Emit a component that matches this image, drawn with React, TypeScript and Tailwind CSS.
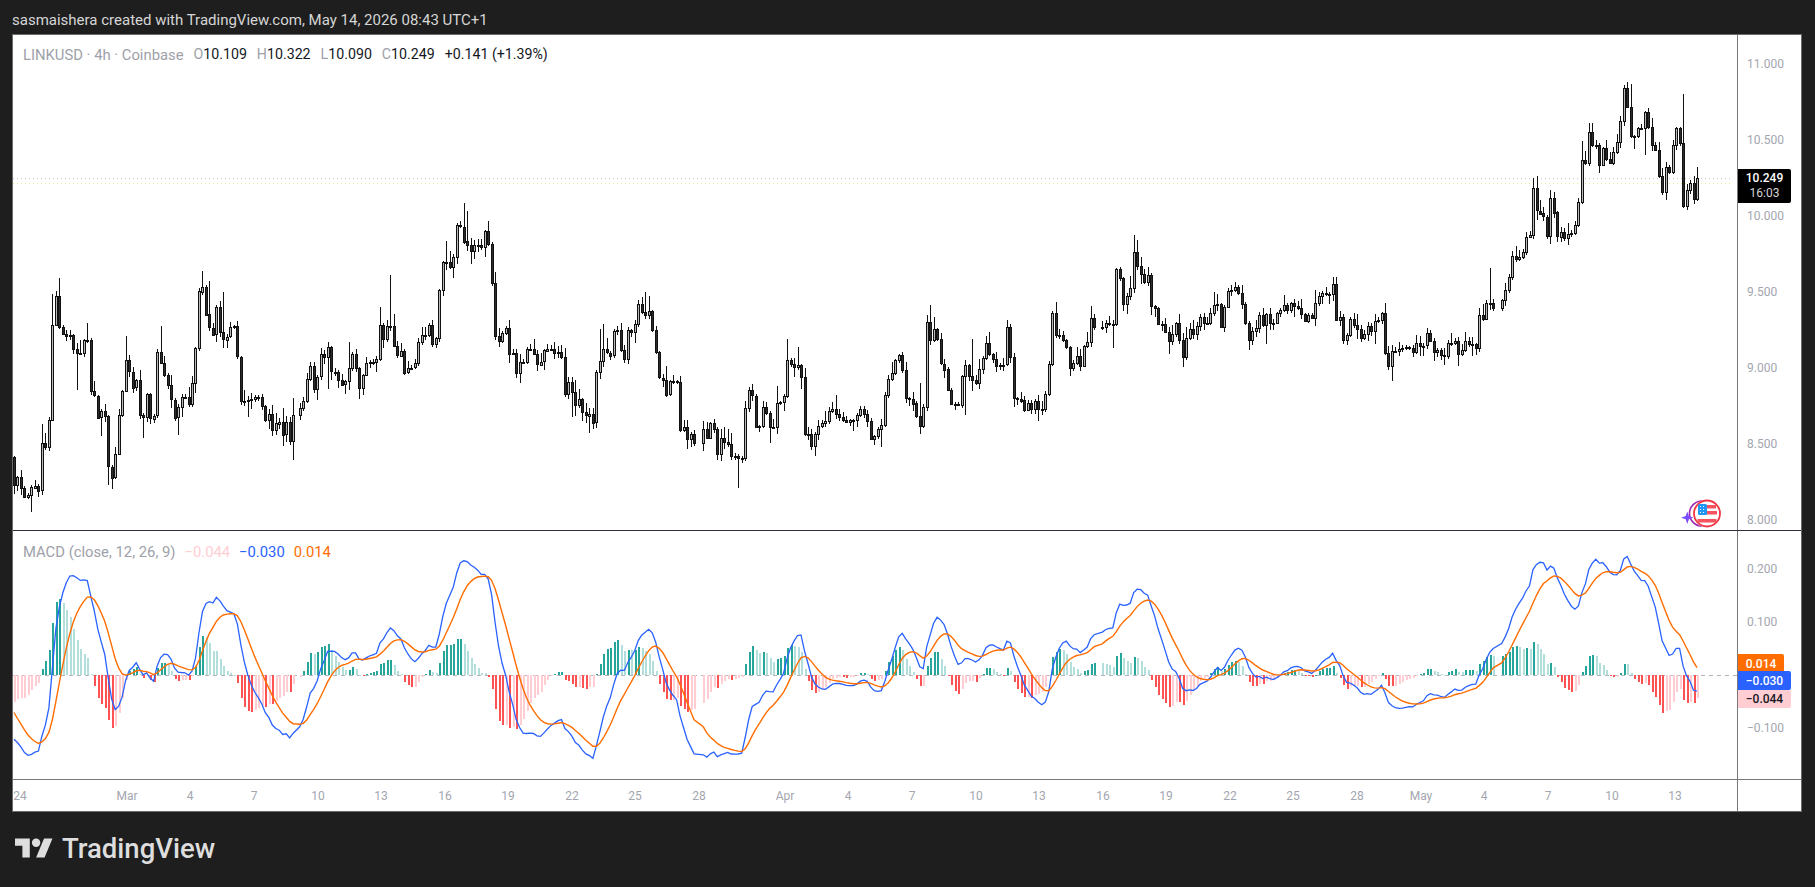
const STEP = 3.49;

// closes traced per candle, in zoom px: y = y0 + v / 3
const SECTIONS = [
  {
    x0: 14, y0: 250, vals: [705, 682, 715, 742, 735, 712, 707, 722, 580, 592, 510, 226, 138, 232, 253, 258, 256, 298, 310, 310, 270, 270, 424, 437, 502, 484, 499, 650, 683, 613, 496, 424, 331, 365, 412, 391, 495, 502, 433, 505, 497, 307, 340, 376, 406, 449, 502, 472, 442, 441, 463, 400, 295, 124, 110, 193, 233, 253, 172, 247, 268, 260, 232, 229, 320, 452, 452, 450, 448, 442, 441, 467, 510, 492, 540, 520, 515, 553, 517, 575, 496],
  },
  {
    x0: 299.7, y0: 190, vals: [655, 634, 568, 529, 597, 560, 493, 503, 472, 545, 547, 570, 584, 574, 535, 493, 535, 596, 556, 520, 517, 517, 508, 406, 448, 408, 408, 469, 496, 482, 547, 535, 533, 520, 457, 436, 436, 406, 464, 445, 301, 217, 217, 232, 202, 106, 110, 154, 166, 184, 166, 165, 172, 124, 163, 280, 439, 454, 430, 415, 493, 490, 551, 517, 516, 478, 478, 493, 523, 515, 481, 476, 476, 488, 487, 502, 613, 577, 607, 646, 628, 667, 676, 671, 697, 547, 514, 478, 488, 497, 424, 421, 481, 508, 421, 428, 403, 343, 367, 376, 364, 421, 487, 563, 569, 613, 574, 574, 576, 721, 712, 748, 733, 760],
  },
  {
    x0: 703.3, y0: 220, vals: [628, 655, 610, 628, 703, 655, 667, 673, 710, 708, 714, 716, 565, 511, 527, 619, 619, 562, 580, 622, 622, 550, 547, 529, 421, 433, 442, 436, 472, 643, 643, 679, 643, 619, 610, 604, 574, 568, 583, 592, 601, 607, 601, 601, 586, 568, 583, 604, 658, 649, 628, 616, 526, 478, 460, 421, 406, 451, 535, 536, 550, 589, 619, 562, 307, 361, 328, 358, 431, 448, 511, 553, 553, 556, 469, 436, 469, 481, 490, 448, 415, 370, 403, 418, 439, 436, 434, 322, 412, 535, 536, 541, 571, 550, 568, 544, 568, 568, 523, 433, 280, 346, 345, 361, 382, 445, 430, 409, 439, 379, 367, 295, 322],
  },
  {
    x0: 1102.3, y0: 220, vals: [321, 310, 313, 313, 148, 175, 253, 229, 205, 97, 139, 163, 187, 166, 259, 265, 313, 313, 337, 364, 343, 310, 361, 412, 355, 328, 343, 319, 292, 310, 310, 280, 256, 253, 322, 262, 214, 211, 202, 220, 253, 310, 361, 334, 325, 286, 316, 283, 310, 310, 280, 271, 256, 271, 250, 259, 265, 283, 304, 286, 295, 250, 229, 220, 221, 223, 193, 301, 292, 361, 346, 298, 316, 328, 355, 343, 319, 334, 304, 301, 280, 400, 439, 394, 394, 388, 385, 382, 385, 397, 370, 379, 377, 340, 364, 397, 391, 406, 408, 370, 370, 364, 403, 391, 364, 373, 373, 385, 286, 298, 250, 250, 265],
  },
  {
    x0: 1501.6, y0: 60, vals: [720, 690, 650, 588, 596, 590, 575, 531, 526, 385, 452, 460, 470, 528, 413, 457, 530, 516, 535, 522, 518, 495, 427, 301, 311, 217, 257, 256, 316, 265, 298, 310, 277, 247, 184, 85, 142, 229, 229, 205, 205, 157, 202, 256, 271, 349, 397, 322, 337, 256, 205, 250, 439, 391, 370, 418, 355],
  },
];

// long wicks read off the picture: [x, y]
const WICKS = [
  [59, 278], [52, 294], [204, 271], [208, 281], [222, 292], [126, 336], [162, 326], [42, 424], [88, 323], [296, 398],
  [77, 390], [31, 512], [293, 460], [144, 438], [247, 417], [112, 489], [109, 485], [102, 436], [179, 435],
  [462, 203], [392, 275], [381, 307], [466, 211], [445, 245], [448, 241], [600, 329], [604, 324], [646, 292], [643, 297], [349, 342], [650, 296],
  [469, 264], [498, 347], [572, 417], [590, 433], [328, 389], [519, 383],
  [788, 339], [798, 347], [837, 395], [777, 386], [929, 305], [933, 317], [1056, 302], [971, 339], [918, 383],
  [738, 488], [770, 443], [816, 456], [880, 447], [964, 415],
  [1134, 235], [1138, 240], [1491, 268], [1219, 294], [1215, 292], [1337, 277],
  [1113, 348], [1392, 381], [1184, 367], [1265, 344],
  [1534, 178], [1583, 141], [1590, 123], [1594, 123], [1626, 84], [1629, 84], [1682, 94], [1700, 167],
  [1633, 149], [1643, 155], [1686, 210], [1665, 200], [1622, 148],
];

type Candle = { x: number; open: number; close: number; high: number; low: number };

function buildCandles() {
  const out: Candle[] = [];
  let seed = 17;
  const rnd = () => {
    seed = (seed * 16807) % 2147483647;
    return seed / 2147483647;
  };
  let prev = 457;
  for (const s of SECTIONS) {
    s.vals.forEach((v, i) => {
      const close = s.y0 + v / 3;
      const open = prev;
      prev = close;
      const high = Math.min(open, close) - 1 - rnd() * rnd() * 14;
      const low = Math.max(open, close) + 1 + rnd() * rnd() * 12;
      out.push({ x: s.x0 + i * STEP, open, close, high, low });
    });
  }
  for (const [x, y] of WICKS) {
    let best = out[0];
    for (const c of out) if (Math.abs(c.x - x) < Math.abs(best.x - x)) best = c;
    if (y < best.high) best.high = y;
    if (y > best.low) best.low = y;
  }
  return out;
}

const candles = buildCandles();
const ZERO = 675;
const PX_PER_UNIT = 530;

const toPrice = (y: number) => 11 - (y - 63.5) / 152;

// real MACD(12, 26, 9) off the traced closes, seeded so the left edge lines up
function buildMacd() {
  const k12 = 2 / 13;
  const k26 = 2 / 27;
  const k9 = 2 / 10;
  const first = toPrice(candles[0].close);
  let e12 = first + 0.28;
  let e26 = e12 + 0.107;
  let sig = -0.058;
  return candles.map((c) => {
    const p = toPrice(c.close);
    e12 += (p - e12) * k12;
    e26 += (p - e26) * k26;
    const macd = e12 - e26;
    sig += (macd - sig) * k9;
    return { x: c.x, macd, sig, hist: macd - sig };
  });
}

const macd = buildMacd();
const my = (v: number) => ZERO - v * PX_PER_UNIT;
const line = (k: "macd" | "sig") => macd.map((m) => `${m.x.toFixed(1)},${my(m[k]).toFixed(1)}`).join(" ");

function barColor(i: number) {
  const h = macd[i].hist;
  const p = i > 0 ? macd[i - 1].hist : h;
  if (h >= 0) return h > p ? "#26a69a" : "#b2dfdb";
  return h < p ? "#ff5252" : "#ffcdd2";
}

const TICKS: [string, number][] = [
  ["24", 20], ["Mar", 127], ["4", 190], ["7", 254], ["10", 318], ["13", 381], ["16", 445], ["19", 508], ["22", 572], ["25", 635], ["28", 699],
  ["Apr", 785], ["4", 848], ["7", 912], ["10", 976], ["13", 1039], ["16", 1103], ["19", 1166], ["22", 1230], ["25", 1293], ["28", 1357],
  ["May", 1421], ["4", 1484], ["7", 1548], ["10", 1612], ["13", 1675],
];

function FlagBadge() {
  return (
    <g>
      <circle cx="1702" cy="513.5" r="12.5" fill="none" stroke="#9c27b0" strokeWidth="1.6" />
      <path d="M1687.3 511.5l1.6 4.6 4.6 1.6-4.6 1.6-1.6 4.6-1.6-4.6-4.6-1.6 4.6-1.6z" fill="#7c4dff" />
      <circle cx="1707" cy="513.5" r="14" fill="#fff" />
      <circle cx="1707" cy="513.5" r="13" fill="none" stroke="#f23645" strokeWidth="1.8" />
      <path d="M1698 505h18v3.5h-18zM1706 511h11v3.5h-11zM1697.5 519h19v3.5h-19z" fill="#f7525f" />
      <rect x="1698" y="504" width="9" height="11" rx="1.5" fill="#2196f3" />
      <path d="M1700 506h1v1h-1zM1703 506h1v1h-1zM1700 509h1v1h-1zM1703 509h1v1h-1zM1700 512h1v1h-1zM1703 512h1v1h-1z" fill="#fff" />
    </g>
  );
}

function PricePane() {
  return (
    <svg width="1724" height="495" viewBox="13 35 1724 495" className="block">
      <line x1="13" x2="1733" y1="178.5" y2="178.5" stroke="#c8c9ce" strokeDasharray="1 3" />
      <line x1="13" x2="1733" y1="183.5" y2="183.5" stroke="#ecec8f" strokeDasharray="1 3" />
      {candles.map((c, i) => {
        const top = Math.round(Math.min(c.open, c.close));
        const h = Math.max(1, Math.round(Math.abs(c.open - c.close)));
        const x = Math.round(c.x);
        return (
          <g key={i} shapeRendering="crispEdges">
            <line x1={x + 0.5} x2={x + 0.5} y1={c.high} y2={c.low} stroke="#111" />
            <rect x={x - 0.5} y={top + 0.5} width="2" height={h} fill={c.close < c.open ? "#b9b9b9" : "#2b2b2b"} stroke="#111" />
          </g>
        );
      })}
      <FlagBadge />
    </svg>
  );
}

function MacdPane() {
  return (
    <svg width="1724" height="248" viewBox="13 531 1724 248" className="block">
      <line x1="13" x2="1737" y1={ZERO + 0.5} y2={ZERO + 0.5} stroke="#b2b5be" strokeDasharray="4 4" />
      {macd.map((m, i) => {
        const y = my(m.hist);
        return (
          <rect
            key={i}
            x={Math.round(m.x)}
            y={Math.min(y, ZERO)}
            width="2"
            height={Math.max(1, Math.abs(y - ZERO))}
            fill={barColor(i)}
            shapeRendering="crispEdges"
          />
        );
      })}
      <polyline points={line("macd")} fill="none" stroke="#2962ff" strokeWidth="1.3" />
      <polyline points={line("sig")} fill="none" stroke="#ff6d00" strokeWidth="1.4" />
    </svg>
  );
}

const PRICES = ["11.000", "10.500", "10.000", "9.500", "9.000", "8.500", "8.000"];
const MACD_LABELS = ["0.200", "0.100", "", "−0.100"];

function Ohlc({ k, v }: { k: string; v: string }) {
  return (
    <span className="ml-[10px]">
      <span className="text-[#9ea1a9]">{k}</span>
      <span className="text-[#131722]">{v}</span>
    </span>
  );
}

export default function App() {
  return (
    <div className="flex h-[887px] w-full flex-col bg-[#1e1e1e] font-['Roboto',sans-serif]">
      <div className="flex h-[34px] items-center pl-[12px] pt-[6px] text-[15px] text-[#d6d6d6]">
        sasmaishera created with TradingView.com, May 14, 2026 08:43 UTC+1
      </div>

      <div className="ml-[12px] flex h-[778px] w-[1790px] flex-col border border-[#6b6b6b] bg-white">
        <div className="relative flex h-[495px]">
          <PricePane />
          <div className="absolute left-[10px] top-[9px] flex items-center text-[14.2px]">
            <span className="text-[14.8px] text-[#9ea1a9]">LINKUSD · 4h · Coinbase</span>
            <Ohlc k="O" v="10.109" />
            <Ohlc k="H" v="10.322" />
            <Ohlc k="L" v="10.090" />
            <Ohlc k="C" v="10.249" />
            <span className="ml-[10px] text-[#131722]">+0.141 (+1.39%)</span>
          </div>
          <div className="relative flex flex-1 flex-col gap-[56px] border-l border-[#787878] pt-[19px] pl-[9px] text-[12px] text-[#a3a6af]">
            {PRICES.map((p) => (
              <div key={p} className="flex h-[20px] items-center">
                {p}
              </div>
            ))}
            <div className="absolute left-0 top-[134px] flex h-[34px] w-[53px] flex-col items-center justify-center rounded-r-[2px] bg-black text-[12px] font-medium leading-[15px] text-white">
              <span>10.249</span>
              <span className="font-normal text-[#d4d4d4]">16:03</span>
            </div>
          </div>
        </div>

        <div className="h-px bg-[#2a2e39]" />

        <div className="relative flex h-[248px]">
          <MacdPane />
          <div className="absolute left-[10px] top-[10px] flex items-center gap-[9px] text-[14.8px]">
            <span className="text-[#9ea1a9]">MACD (close, 12, 26, 9)</span>
            <span className="text-[#ffcdd2]">−0.044</span>
            <span className="text-[#2962ff]">−0.030</span>
            <span className="text-[#ff6d00]">0.014</span>
          </div>
          <div className="relative flex flex-1 flex-col gap-[33px] border-l border-[#787878] pt-[28px] pl-[9px] text-[12px] text-[#a3a6af]">
            {MACD_LABELS.map((m, i) => (
              <div key={i} className="flex h-[20px] items-center">
                {m}
              </div>
            ))}
            <div className="absolute left-0 top-[123px] flex h-[19px] w-[46px] items-center justify-center rounded-r-[2px] bg-[#ff6d00] text-[12px] font-medium text-white">
              0.014
            </div>
            <div className="absolute left-0 top-[140px] flex h-[19px] w-[53px] items-center justify-center rounded-r-[2px] bg-[#2962ff] text-[12px] font-medium text-white">
              −0.030
            </div>
            <div className="absolute left-0 top-[159px] flex h-[18px] w-[53px] items-center justify-center rounded-r-[2px] bg-[#ffcdd2] text-[12px] font-medium text-[#131722]">
              −0.044
            </div>
          </div>
        </div>

        <div className="flex h-[32px] border-t border-[#787878]">
          <div className="flex w-[1724px] items-center text-[12px] text-[#a3a6af]">
            {TICKS.map(([t, x], i) => (
              <div
                key={i}
                className="flex w-0 justify-center whitespace-nowrap"
                style={{ marginLeft: i === 0 ? x - 13 : x - TICKS[i - 1][1] }}
              >
                {t}
              </div>
            ))}
          </div>
          <div className="flex-1 border-l border-[#787878]" />
        </div>
      </div>

      <div className="flex flex-1 items-center gap-[9px] pl-[15px] pb-[1px]">
        <svg width="38" height="30" viewBox="0 0 36 28" fill="#dedede">
          <path d="M14 22H7V11H0V4h14v18zM28 22h-8l7.5-18h8L28 22z" />
          <circle cx="20" cy="8" r="4" />
        </svg>
        <span className="text-[27.5px] font-medium text-[#dedede]">TradingView</span>
      </div>
    </div>
  );
}
